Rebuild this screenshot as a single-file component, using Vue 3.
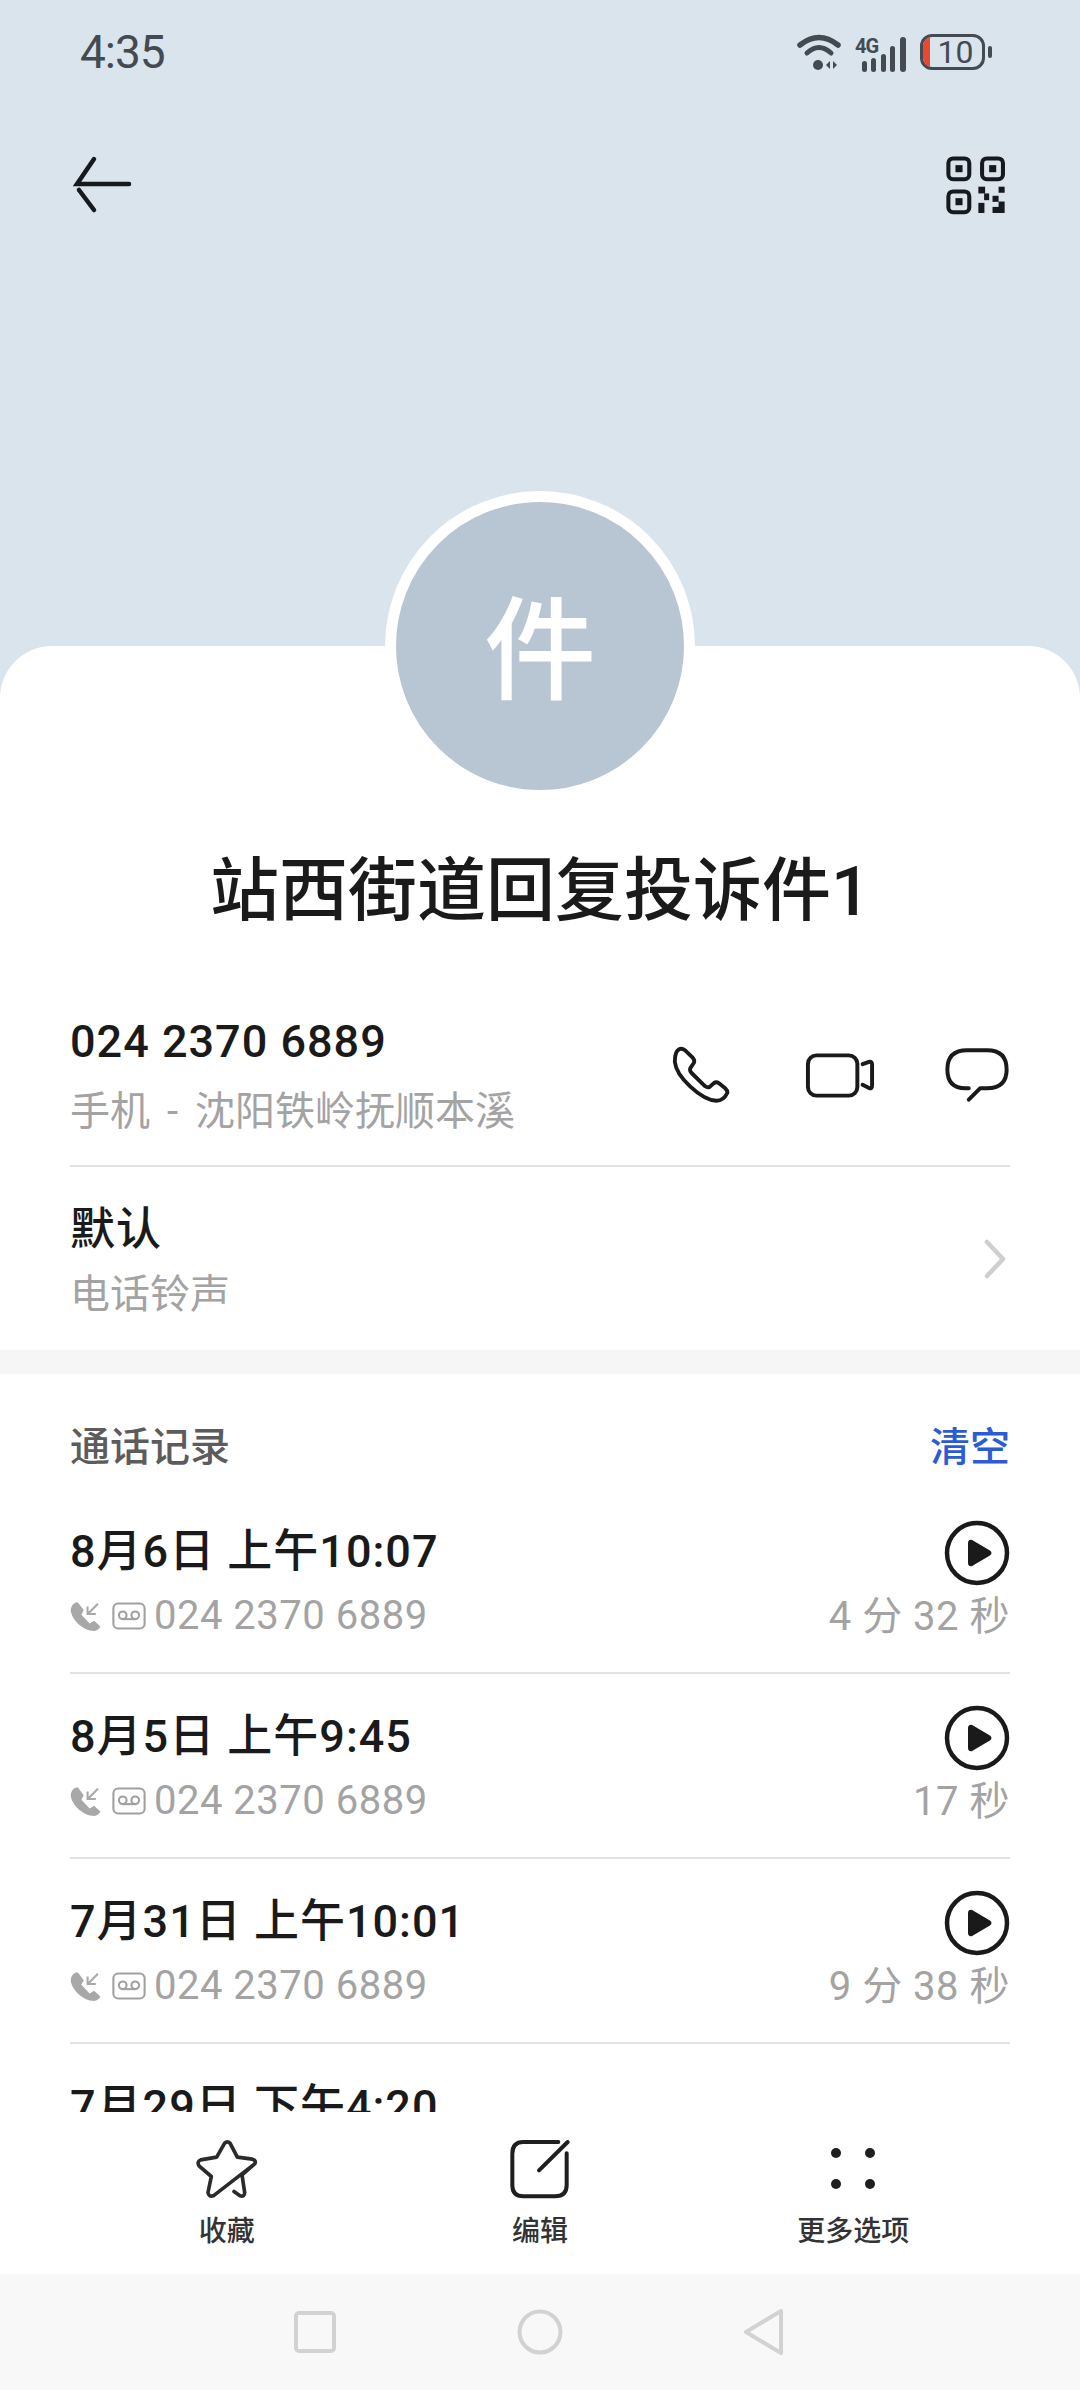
<script setup>
const calls = [
  { date: '8月6日 上午10:07', number: '024 2370 6889', length: '4 分 32 秒' },
  { date: '8月5日 上午9:45', number: '024 2370 6889', length: '17 秒' },
  { date: '7月31日 上午10:01', number: '024 2370 6889', length: '9 分 38 秒' },
  { date: '7月29日 下午4:20', number: '024 2370 6889', length: '' }
];
</script>

<template>
  <div class="page">
    <header class="hero">
      <div class="status">
        <span class="time">4:35</span>
        <div class="status-icons">
          <!-- wifi -->
          <svg class="wifi" width="46" height="36" viewBox="0 0 46 36">
            <path d="M3 11 Q22 -4 41 11" fill="none" stroke="#434a52" stroke-width="5.5" stroke-linecap="round" />
            <path d="M10 19 Q22 8 34 19" fill="none" stroke="#434a52" stroke-width="5" stroke-linecap="round" />
            <circle cx="21" cy="31" r="5" fill="#434a52" />
            <path d="M33 27 L33 35 L29 31 Z M36 27 L36 35 L40 31 Z" fill="#434a52" />
          </svg>
          <!-- mobile signal -->
          <svg class="signal" width="52" height="40" viewBox="0 -4 52 40">
            <text x="0" y="17" class="net">4G</text>
            <rect x="7" y="25" width="5" height="11" rx="2.5" fill="#434a52" />
            <rect x="16" y="22" width="5" height="14" rx="2.5" fill="#434a52" />
            <rect x="26" y="18" width="5" height="18" rx="2.5" fill="#434a52" />
            <rect x="35" y="10" width="5" height="26" rx="2.5" fill="#434a52" />
            <rect x="45" y="1" width="6" height="35" rx="3" fill="#434a52" />
          </svg>
          <div class="battery">
            <span class="battery-level"></span>
            <span class="battery-text">10</span>
          </div>
          <span class="battery-nub"></span>
        </div>
      </div>

      <div class="toolbar">
        <svg class="back" width="66" height="60" viewBox="0 0 66 60" fill="none" stroke="#16191d" stroke-width="4.5" stroke-linecap="round">
          <path d="M26 5 L9 30 L61 30" />
          <path d="M11 36 L26 56" />
        </svg>
        <svg width="64" height="64" viewBox="30 25 190 190">
          <g fill="none" stroke="#16191d" stroke-width="12">
            <rect x="46" y="44" width="62" height="62" rx="14" />
            <rect x="146" y="44" width="62" height="62" rx="14" />
            <rect x="46" y="142" width="62" height="62" rx="14" />
          </g>
          <g fill="#16191d">
            <rect x="67" y="64" width="21" height="21" />
            <rect x="167" y="64" width="21" height="21" />
            <rect x="67" y="162" width="21" height="21" />
            <rect x="135" y="128" width="20" height="20" />
            <rect x="195" y="128" width="18" height="18" />
            <rect x="152" y="148" width="15" height="20" />
            <rect x="177" y="155" width="18" height="18" />
            <rect x="135" y="176" width="18" height="30" />
            <rect x="195" y="172" width="18" height="34" />
            <rect x="177" y="188" width="20" height="18" />
          </g>
        </svg>
      </div>
    </header>

    <main class="card">
      <div class="avatar"><span>件</span></div>
      <h1 class="name">站西街道回复投诉件1</h1>

      <div class="scroll">
        <section class="contact">
          <div class="row number-row">
            <div>
              <div class="primary">024 2370 6889</div>
              <div class="secondary">手机<span class="dash">-</span>沈阳铁岭抚顺本溪</div>
            </div>
            <div class="contact-actions">
              <svg class="phone" width="58" height="58" viewBox="90 70 180 180" fill="none" stroke="#1a1a1a" stroke-width="12" stroke-linejoin="round">
                <path d="M112 80 Q98 88 99 120 C103 165 180 238 228 240 Q250 240 262 215 Q262 207 255 201 L235 185 Q227 180 219 186 L207 197 Q200 200 193 195 L150 153 Q143 145 148 137 L158 122 Q161 114 155 107 L130 83 Q121 76 112 80 Z" />
              </svg>
              <svg class="video" width="72" height="50" viewBox="485 85 220 150" fill="none" stroke="#1a1a1a" stroke-width="12" stroke-linecap="round" stroke-linejoin="round">
                <rect x="497" y="100" width="151" height="123" rx="26" />
                <path d="M664 127 L684 120 Q693 118 693 128 L693 192 Q693 203 684 200 L664 190" />
              </svg>
              <svg class="bubble" width="66" height="56" viewBox="910 80 200 170" fill="none" stroke="#1a1a1a" stroke-width="12" stroke-linecap="round" stroke-linejoin="round">
                <path d="M985 205 L975 205 Q920 205 920 148 Q920 90 980 90 L1040 90 Q1100 90 1100 148 Q1100 205 1040 205 L1020 205 L985 240" />
              </svg>
            </div>
          </div>
          <div class="row ring-row">
            <div>
              <div class="primary">默认</div>
              <div class="secondary">电话铃声</div>
            </div>
            <svg class="chevron" width="22" height="40" viewBox="0 0 22 40" fill="none" stroke="#cfcfcf" stroke-width="4.5" stroke-linecap="round" stroke-linejoin="round">
              <path d="M3 3 L19 20 L3 37" />
            </svg>
          </div>
        </section>

        <div class="band"></div>

        <section class="log">
          <div class="log-head">
            <span>通话记录</span>
            <span class="clear">清空</span>
          </div>
          <div v-for="call in calls" :key="call.date" class="call">
            <div>
              <div class="primary">{{ call.date }}</div>
              <div class="call-line">
                <svg width="31" height="31" viewBox="95 358 90 90">
                  <path d="M112 362 Q98 368 97 385 C100 415 135 445 165 445 Q178 443 183 432 L165 415 L152 423 L128 398 L135 385 L118 362 Z" fill="#a8a8a8" />
                  <path d="M176 366 L148 394 M146 374 L146 396 L170 396" fill="none" stroke="#a8a8a8" stroke-width="6" />
                </svg>
                <svg class="voicemail" width="34" height="28" viewBox="220 362 98 80" fill="none" stroke="#a0a0a0" stroke-width="6">
                  <rect x="224" y="366" width="90" height="72" rx="14" />
                  <circle cx="251" cy="400" r="11" />
                  <circle cx="287" cy="400" r="11" />
                  <path d="M251 411 L287 411" />
                </svg>
                <span class="secondary digits">{{ call.number }}</span>
              </div>
            </div>
            <div v-if="call.length" class="call-right">
              <svg width="66" height="66" viewBox="0 0 66 66">
                <circle cx="33" cy="33" r="30" fill="none" stroke="#1a1a1a" stroke-width="4.5" />
                <path d="M25 23 Q25 20 28 21 L45 31 Q48 33 45 35 L28 45 Q25 46 25 43 Z" fill="#1a1a1a" stroke="#1a1a1a" stroke-width="2" stroke-linejoin="round" />
              </svg>
              <div class="secondary digits length">{{ call.length }}</div>
            </div>
          </div>
        </section>
      </div>
    </main>

    <footer class="actions">
      <div class="action">
        <svg width="65" height="62" viewBox="40 35 195 185" fill="none" stroke="#2b2b2b" stroke-width="11" stroke-linecap="round" stroke-linejoin="round">
          <path d="M160 195 L178 208 Q192 212 192 198 L184 145 L222 112 Q228 102 215 98 L170 92 L148 50 Q140 42 132 50 L108 92 L60 100 Q48 105 55 118 L92 150 L82 198 Q84 212 98 208 L222 112" />
        </svg>
        <span>收藏</span>
      </div>
      <div class="action">
        <svg width="62" height="62" viewBox="42 38 186 186" fill="none" stroke="#1f1f1f" stroke-width="12" stroke-linecap="round">
          <path d="M190 50 L85 50 Q52 50 52 85 L52 180 Q52 213 85 213 L180 213 Q215 213 215 180 L215 84" />
          <path d="M132 135 L218 50" />
        </svg>
        <span>编辑</span>
      </div>
      <div class="action">
        <svg width="62" height="62" viewBox="0 0 62 62" fill="#1f1f1f">
          <circle cx="14" cy="15" r="5" />
          <circle cx="48" cy="15" r="5" />
          <circle cx="14" cy="46" r="5" />
          <circle cx="48" cy="46" r="5" />
        </svg>
        <span>更多选项</span>
      </div>
    </footer>

    <nav class="navbar">
      <svg width="44" height="46" viewBox="0 0 44 46" fill="none" stroke="#d2d2d2" stroke-width="4">
        <rect x="3" y="4" width="38" height="38" rx="3" />
      </svg>
      <svg width="46" height="46" viewBox="0 0 46 46" fill="none" stroke="#d2d2d2" stroke-width="4">
        <circle cx="23" cy="23" r="20.5" />
      </svg>
      <svg width="44" height="48" viewBox="0 0 44 48" fill="none" stroke="#d2d2d2" stroke-width="4" stroke-linejoin="round">
        <path d="M38 3 L3 24 L38 45 Z" />
      </svg>
    </nav>
  </div>
</template>

<style scoped>
.page {
  width: 1080px;
  height: 2390px;
  display: flex;
  flex-direction: column;
  overflow: hidden;
  background: #dae4ec;
  color: #1a1a1a;
  font-family: Roboto, "Noto Sans CJK SC", sans-serif;
}

/* top area */
.hero {
  flex: none;
  height: 646px;
}

.status {
  height: 104px;
  padding: 0 88px 0 80px;
  display: flex;
  align-items: center;
  justify-content: space-between;
  box-sizing: border-box;
}

.time {
  font-size: 46px;
  color: #434a52;
  letter-spacing: -1px;
}

.status-icons {
  display: flex;
  align-items: center;
}

.wifi {
  margin-right: 12px;
}

.signal {
  margin-right: 13px;
}

.net {
  font-size: 20px;
  font-weight: 700;
  letter-spacing: -1px;
  fill: #434a52;
  font-family: Roboto, sans-serif;
}

.battery {
  width: 65px;
  height: 36px;
  box-sizing: border-box;
  border: 3px solid #434a52;
  border-radius: 12px;
  position: relative;
  overflow: hidden;
  display: flex;
  align-items: center;
  justify-content: center;
}

.battery-level {
  position: absolute;
  left: 0;
  top: 0;
  bottom: 0;
  width: 7px;
  background: #e8482f;
}

.battery-text {
  font-size: 32px;
  line-height: 30px;
  color: #434a52;
  margin-left: 6px;
}

.battery-nub {
  width: 4px;
  height: 12px;
  margin-left: 3px;
  border-radius: 2px;
  background: #434a52;
}

.toolbar {
  height: 160px;
  padding: 0 73px;
  display: flex;
  align-items: center;
  justify-content: space-between;
}

.back {
  margin-left: -5px;
}

/* white sheet */
.card {
  flex: 1;
  min-height: 0;
  display: flex;
  flex-direction: column;
  background: #fff;
  border-radius: 52px 52px 0 0;
}

.avatar {
  flex: none;
  align-self: center;
  width: 310px;
  height: 310px;
  margin-top: -155px;
  padding-bottom: 8px;
  box-sizing: border-box;
  border: 11px solid #fff;
  border-radius: 50%;
  background: #b8c5d2;
  display: flex;
  align-items: center;
  justify-content: center;
  color: #fff;
  font-size: 112px;
  font-weight: 500;
}

.name {
  flex: none;
  margin: 46px 0 0;
  height: 90px;
  line-height: 90px;
  text-align: center;
  font-size: 69px;
  font-weight: 500;
}

.scroll {
  flex: 1;
  min-height: 0;
  overflow: hidden;
}

.row {
  margin: 0 70px;
  display: flex;
  align-items: center;
  justify-content: space-between;
}

.primary {
  font-size: 45px;
  line-height: 60px;
  font-weight: 500;
  letter-spacing: 1px;
  color: #1a1a1a;
}

.secondary {
  font-size: 40px;
  line-height: 56px;
  color: #a3a3a3;
}

.digits {
  letter-spacing: 0.5px;
}

.dash {
  margin: 0 17px;
}

.number-row {
  box-sizing: border-box;
  height: 230px;
  padding-top: 75px;
  padding-bottom: 26px;
  border-bottom: 2px solid #e3e3e3;
  align-items: flex-start;
}

.number-row .secondary {
  margin-top: 12px;
}

.contact-actions {
  display: flex;
  align-items: center;
  margin-top: 34px;
}

.phone {
  margin-right: 74px;
}

.video {
  margin-right: 68px;
}

.ring-row {
  box-sizing: border-box;
  height: 183px;
  padding-top: 5px;
  padding-right: 4px;
}

.ring-row .secondary {
  margin-top: 7px;
}

.chevron {
  margin-bottom: 4px;
}

.band {
  height: 24px;
  background: #f6f6f6;
}

.log {
  padding: 46px 70px 0;
}

.log-head {
  display: flex;
  justify-content: space-between;
  height: 56px;
  line-height: 56px;
  margin-bottom: 13px;
  font-size: 40px;
  font-weight: 500;
  color: #5c5c5c;
}

.clear {
  color: #2c5bd4;
}

.call {
  box-sizing: border-box;
  height: 185px;
  padding-top: 33px;
  border-bottom: 2px solid #e3e3e3;
  display: flex;
  justify-content: space-between;
}

.call-line {
  display: flex;
  align-items: center;
  margin-top: 6px;
}

.voicemail {
  margin-left: 11px;
  margin-right: 8px;
}

.call-right {
  display: flex;
  flex-direction: column;
  align-items: flex-end;
  margin-top: -2px;
}

.length {
  white-space: pre;
  margin-top: 3px;
}

/* bottom actions */
.actions {
  flex: none;
  height: 162px;
  padding: 26px 70px 0;
  box-sizing: border-box;
  display: grid;
  grid-template-columns: repeat(3, 1fr);
  background: #fff;
}

.action {
  display: flex;
  flex-direction: column;
  align-items: center;
  font-size: 28px;
  line-height: 40px;
  font-weight: 500;
  color: #333;
}

.action span {
  margin-top: 12px;
}

.navbar {
  flex: none;
  height: 116px;
  display: flex;
  align-items: center;
  justify-content: center;
  gap: 180px;
  background: #f8f8f8;
}
</style>

<style>
html,
body {
  margin: 0;
  background: #fff;
}
</style>
